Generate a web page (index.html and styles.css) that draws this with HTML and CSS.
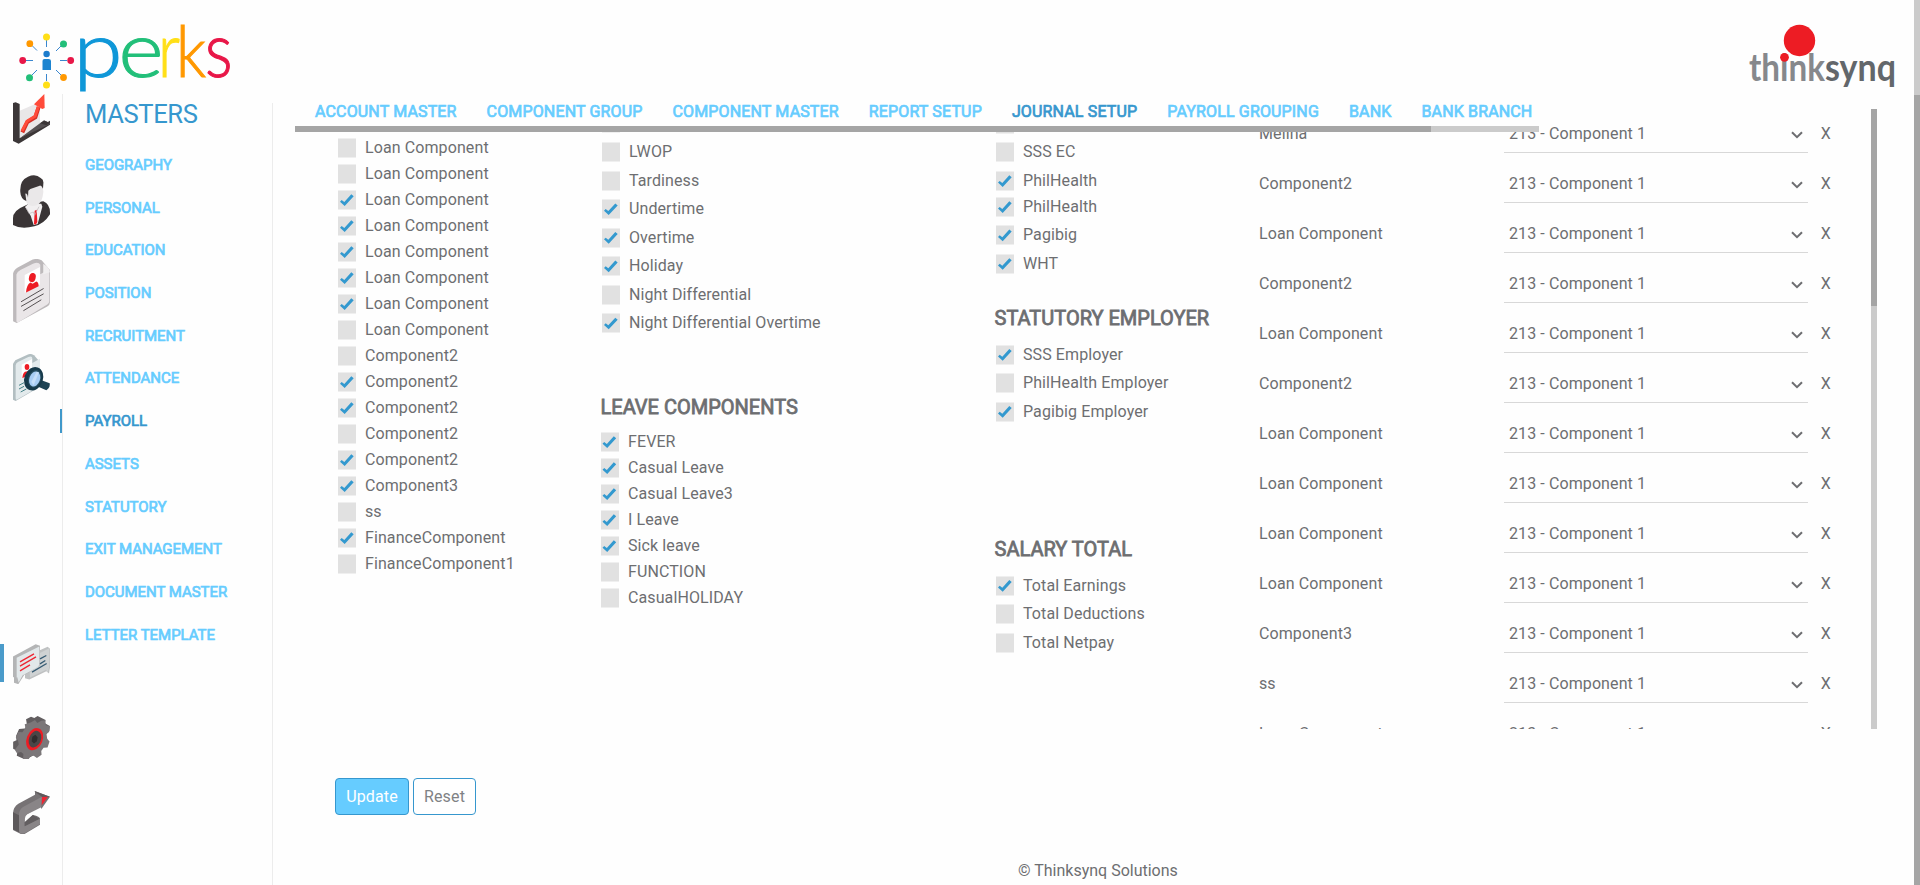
FILE: index.html
```html
<!DOCTYPE html>
<html lang="en">
<head>
<meta charset="utf-8">
<title>Perks - Journal Setup</title>
<link rel="stylesheet" href="styles.css">
</head>
<body>
<div class="page">
<header class="header">
  <svg class="logo" viewBox="0 0 240 94" width="240" height="94">
    <g stroke="#3a87cf" stroke-width="1">
      <path d="M46.500 40v7M46.500 74v7M26 60.500h7M60 60.500h7M32 45.500l5 5M61 46l-5 5M32 75l5-5M61 75l-5-5"/>
    </g>
    <g><circle cx="46.500" cy="37" r="3.500" fill="#ffdf17"/><circle cx="46.500" cy="85" r="3.500" fill="#ffdf17"/>
    <circle cx="29.800" cy="43.700" r="3.400" fill="#ff9800"/><circle cx="63.500" cy="77.500" r="3.400" fill="#ff9800"/>
    <circle cx="63.500" cy="44" r="3.500" fill="#22bf79"/><circle cx="29.500" cy="77.700" r="3.500" fill="#22bf79"/>
    <circle cx="22.700" cy="60.500" r="3.400" fill="#e81748"/><circle cx="70.700" cy="60.500" r="3.400" fill="#e81748"/>
    <circle cx="46.600" cy="54" r="3.200" fill="#1c7ccc"/><path d="M42.500 70V61q0-2 2-2h4q2.500 0 2.500 2v9z" fill="#1c84d0"/></g>
    <g class="perks">
      <text x="73.500" y="76.500" fill="#0f97d8" stroke="#0f97d8" textLength="49" lengthAdjust="spacingAndGlyphs">p</text>
      <text x="118.500" y="76.500" fill="#22bf79" stroke="#22bf79" textLength="45" lengthAdjust="spacingAndGlyphs">e</text>
      <text x="158" y="76.500" fill="#ffdf17" stroke="#ffdf17" textLength="22" lengthAdjust="spacingAndGlyphs">r</text>
      <text class="k" x="176" y="77" fill="#ff9800" stroke="#ff9800" textLength="30" lengthAdjust="spacingAndGlyphs">k</text>
      <text x="205" y="76.500" fill="#e81748" stroke="#e81748" textLength="27.500" lengthAdjust="spacingAndGlyphs">s</text>
    </g>
  </svg>
  <svg class="brand" viewBox="0 0 160 94" width="160" height="94">
    <text class="brand-text" x="8" y="81" textLength="76" lengthAdjust="spacingAndGlyphs" fill="#86888c">think</text>
    <text class="brand-text" x="84" y="81" textLength="71" lengthAdjust="spacingAndGlyphs" fill="#63676b">synq</text>
    <circle cx="58.500" cy="40.500" r="15.700" fill="#ed1c24"/><circle cx="43.500" cy="57.300" r="4.400" fill="#ed1c24"/>
  </svg>
</header>
<div class="body">
  <nav class="rail">
    <a class="ico chart"><svg viewBox="39 282 111 150" width="37" height="50">
      <path d="M59 332l61-26v66l-61 41z" fill="#e9e7e8"/><path d="M39 309l8-2 12 5v103l91-53v12L56 431l-17-8z" fill="#3b3637"/><path d="M59 415l61-45 12-9 18 8v3z" fill="#565153"/><path d="M120 370l13-8 17 7-11 7z" fill="#3b3637"/><path d="M67 397l15-31 24-14 10-31" fill="none" stroke="#d62f25" stroke-width="12" stroke-linejoin="round"/><path d="M66 393l15-29 24-15 10-29" fill="none" stroke="#ff4b3a" stroke-width="9" stroke-linejoin="round"/><path d="M102 313l31-31 1 42-7 3z" fill="#ff4b3a"/></svg></a>
    <a class="ico man"><svg viewBox="39 525 111 159" width="37" height="53">
      <path d="M39 655q0-24 34-37l17-8 40-6q20 8 20 34v5q-18 29-47 36-40 10-64-4z" fill="#393435"/><path d="M75 621l10-10h39l3 9-14 52-12 3-9-28z" fill="#f1eff0"/><path d="M74 590l7-30 45-15 4 30q-2 27-14 37-13 10-29 3-10-6-13-25z" fill="#eae8e9"/><path d="M61 577q-3-36 23-47 23-10 38 4 10 5 8 17l-1 15q-6-13-12-8l-26 9-6 5-1 21q-2-14-8-12l3 22q-17-6-18-26z" fill="#3b3637"/><path d="M104 632l6-3 2 37-5 8-5-2z" fill="#ed1c24"/><path d="M79 624l8 17 13-5 4 10 13-26" fill="none" stroke="#bbb7b9" stroke-width="2"/></svg></a>
    <a class="ico doc"><svg viewBox="39 56 111 193" width="37" height="64">
      <path d="M39 100q2-11 14-18l38-21q18-10 34-1l25 29v98q0 8-8 12l-92 50-11-5z" fill="#bdb9bb"/><path d="M49 103q1-8 12-14l38-19q17-6 22 3v29l27-15v97q0 5-6 9L56 246q-7 4-7-4z" fill="#eae6e8"/><path d="M130 70q20 12 20 26l-20 6z" fill="#f1eff0"/><path d="M74 104l46-24v53l-46 25z" fill="#fff"/><ellipse cx="97" cy="112" rx="10" ry="14" transform="rotate(15 97 112)" fill="#ed1c24"/><path d="M78 157q1-22 13-30l7 4 11-7q7 2 7 14z" fill="#ed1c24"/><path d="M63 185l68-40M63 199l68-38M70 212l54-33" stroke="#555052" stroke-width="3"/></svg></a>
    <a class="ico find"><svg viewBox="39 342 111 141" width="37" height="47">
      <path d="M39 371l7-10 36-17q12-5 20 2l18 20v74l-73 43-8-4z" fill="#b2bec1"/><path d="M47 376q0-6 7-10l31-15q12-5 12 5v13l23-13v83l-66 38q-7 5-7-2z" fill="#e3eaec"/><path d="M65 374l31-17v42l-31 18z" fill="#fff"/><ellipse cx="81" cy="381" rx="7" ry="9" fill="#ed1c24"/><path d="M67 415q1-16 8-20l11-2 3 10z" fill="#ed1c24"/><path d="M57 436l15-8M57 447l15-8M62 456l17-9" stroke="#458187" stroke-width="3"/><path d="M116 418l33 12q2 13-10 21l-31-14z" fill="#1d4354"/><ellipse cx="101" cy="416" rx="28" ry="36" transform="rotate(20 101 416)" fill="#173a4b"/><ellipse cx="104" cy="416" rx="19" ry="27" transform="rotate(20 104 416)" fill="#285063"/><ellipse cx="104" cy="417" rx="16" ry="23" transform="rotate(20 104 417)" fill="#a8cdf4"/><path d="M94 426l16-31 7 2-16 39z" fill="#c6dffa"/></svg></a>
    <a class="ico chat active"><svg viewBox="39 72 111 119" width="37" height="40">
      <path d="M75 110l68-30 7 6v55l-3 19-8-7-51 25-13-4z" fill="#bfc1c2"/><path d="M87 115l61-31v56l-5 16-5-7-48 23z" fill="#cfd2d3"/><path d="M39 109l68-37 13 5v58q-27 19-47 29l-18 28-13-4v-16l-3-2z" fill="#b4b5b6"/><path d="M50 113l68-34v54q-1 6-11 11l-39 21-12 22-4-16-2 1z" fill="#e2e8ea"/><path d="M60 125l42-24M60 138l48-28M60 152l30-18" stroke="#ee2633" stroke-width="4"/><path d="M120 116l19-10M120 131l16-10M96 156l44-26" stroke="#365b73" stroke-width="4"/></svg></a>
    <a class="ico gear"><svg viewBox="39 288 111 130" width="37" height="43">
      <path d="M78 298l15-8 10 4 10-6 24 12-2 10 15 8-3 18-8 5-26 59-27 15-14 3-22-10 2-14-13-7v-21l10-5-1-13 9-21 17-1 7-10z" fill="#625e60"/><path d="M92 308l13-8 7 9 12-7 12-1 2 15 12 3-1 14-9 10 2 14 7 8-6 18-12 1-7 10 1 11-14 10-10-7-10 2-7 12-15-4 1-15-7-6-13 3-6-10 12-16-2-11-7-10 8-17 12 1 9-13-2-11z" fill="#7b7779"/><ellipse cx="104" cy="358" rx="24" ry="35" transform="rotate(22 104 358)" fill="#ed1c24"/><ellipse cx="105" cy="358" rx="18" ry="26" transform="rotate(22 105 358)" fill="#4a4647"/><path d="M97 351l9-6 7 7-2 12-9 7-7-7z" fill="#302d2e"/></svg></a>
    <a class="ico exit"><svg viewBox="39 513 111 129" width="37" height="43">
      <path d="M39 579q1-18 16-28l50-27v-11l45 17-26 37-2-10-44 27q-4 3-4 9v14l25-22q21 5 21 11v18l-45 27q-7 3-14 0l-22-11z" fill="#767274"/><path d="M39 577l18 9v51l-18-9z" fill="#5d595b"/><path d="M57 586q0-18 12-25l57-31-2 32-42 21q-8 5-8 15v20l46-23v17l-45 27q-17 6-18-10z" fill="#898587"/><path d="M74 607l24-22 21 11-45 23z" fill="#625e60"/><path d="M102 513l48 17-20 3z" fill="#5d595b"/><path d="M126 531l18-1-19 26z" fill="#ee2633"/></svg></a>
  </nav>
  <aside class="menu">
    <h1 class="menu-title">MASTERS</h1>
    <a class="menu-item">GEOGRAPHY</a>
    <a class="menu-item">PERSONAL</a>
    <a class="menu-item">EDUCATION</a>
    <a class="menu-item">POSITION</a>
    <a class="menu-item">RECRUITMENT</a>
    <a class="menu-item">ATTENDANCE</a>
    <a class="menu-item current">PAYROLL</a>
    <a class="menu-item">ASSETS</a>
    <a class="menu-item">STATUTORY</a>
    <a class="menu-item">EXIT MANAGEMENT</a>
    <a class="menu-item">DOCUMENT MASTER</a>
    <a class="menu-item">LETTER TEMPLATE</a>
  </aside>
  <main class="main">
    <div class="tabs">
      <div class="tab-row"><a>ACCOUNT MASTER</a><a>COMPONENT GROUP</a><a>COMPONENT MASTER</a><a>REPORT SETUP</a><a class="current">JOURNAL SETUP</a><a>PAYROLL GROUPING</a><a>BANK</a><a>BANK BRANCH</a></div>
      <div class="hbar"><div class="hthumb"></div></div>
    </div>
    <div class="panel">
      <section class="col loans">
        <label class="row"><i class="box"></i>Loan Component</label>
        <label class="row"><i class="box"></i>Loan Component</label>
        <label class="row"><i class="box on"></i>Loan Component</label>
        <label class="row"><i class="box on"></i>Loan Component</label>
        <label class="row"><i class="box on"></i>Loan Component</label>
        <label class="row"><i class="box on"></i>Loan Component</label>
        <label class="row"><i class="box on"></i>Loan Component</label>
        <label class="row"><i class="box"></i>Loan Component</label>
        <label class="row"><i class="box"></i>Component2</label>
        <label class="row"><i class="box on"></i>Component2</label>
        <label class="row"><i class="box on"></i>Component2</label>
        <label class="row"><i class="box"></i>Component2</label>
        <label class="row"><i class="box on"></i>Component2</label>
        <label class="row"><i class="box on"></i>Component3</label>
        <label class="row"><i class="box"></i>ss</label>
        <label class="row"><i class="box on"></i>FinanceComponent</label>
        <label class="row"><i class="box"></i>FinanceComponent1</label>
      </section>
      <section class="col time">
        <label class="row tall"><i class="box"></i></label>
        <label class="row tall"><i class="box"></i>LWOP</label>
        <label class="row tall"><i class="box"></i>Tardiness</label>
        <label class="row tall"><i class="box on"></i>Undertime</label>
        <label class="row tall"><i class="box on"></i>Overtime</label>
        <label class="row tall"><i class="box on"></i>Holiday</label>
        <label class="row tall"><i class="box"></i>Night Differential</label>
        <label class="row tall"><i class="box on"></i>Night Differential Overtime</label>
        <h2 class="heading leave-heading">LEAVE COMPONENTS</h2>
        <div class="leave">
          <label class="row"><i class="box on"></i>FEVER</label>
          <label class="row"><i class="box on"></i>Casual Leave</label>
          <label class="row"><i class="box on"></i>Casual Leave3</label>
          <label class="row"><i class="box on"></i>I Leave</label>
          <label class="row"><i class="box on"></i>Sick leave</label>
          <label class="row"><i class="box"></i>FUNCTION</label>
          <label class="row"><i class="box"></i>CasualHOLIDAY</label>
        </div>
      </section>
      <section class="col statutory">
        <label class="row tall"><i class="box"></i></label>
        <label class="row tall"><i class="box"></i>SSS EC</label>
        <label class="row tall"><i class="box on"></i>PhilHealth</label>
        <label class="row tight"><i class="box on"></i>PhilHealth</label>
        <label class="row tall"><i class="box on"></i>Pagibig</label>
        <label class="row tall"><i class="box on"></i>WHT</label>
        <h2 class="heading employer-heading">STATUTORY EMPLOYER</h2>
        <label class="row tall"><i class="box on"></i>SSS Employer</label>
        <label class="row tall"><i class="box"></i>PhilHealth Employer</label>
        <label class="row tall"><i class="box on"></i>Pagibig Employer</label>
        <h2 class="heading salary-heading">SALARY TOTAL</h2>
        <label class="row tall"><i class="box on"></i>Total Earnings</label>
        <label class="row tall"><i class="box"></i>Total Deductions</label>
        <label class="row tall"><i class="box"></i>Total Netpay</label>
      </section>
      <section class="mapping">
        <div class="map"><span>Melina</span><div class="select">213 - Component 1<svg class="chev" viewBox="0 0 12 8"><path d="M1 1.200l5 5 5-5"/></svg></div><b>X</b></div>
        <div class="map"><span>Component2</span><div class="select">213 - Component 1<svg class="chev" viewBox="0 0 12 8"><path d="M1 1.200l5 5 5-5"/></svg></div><b>X</b></div>
        <div class="map"><span>Loan Component</span><div class="select">213 - Component 1<svg class="chev" viewBox="0 0 12 8"><path d="M1 1.200l5 5 5-5"/></svg></div><b>X</b></div>
        <div class="map"><span>Component2</span><div class="select">213 - Component 1<svg class="chev" viewBox="0 0 12 8"><path d="M1 1.200l5 5 5-5"/></svg></div><b>X</b></div>
        <div class="map"><span>Loan Component</span><div class="select">213 - Component 1<svg class="chev" viewBox="0 0 12 8"><path d="M1 1.200l5 5 5-5"/></svg></div><b>X</b></div>
        <div class="map"><span>Component2</span><div class="select">213 - Component 1<svg class="chev" viewBox="0 0 12 8"><path d="M1 1.200l5 5 5-5"/></svg></div><b>X</b></div>
        <div class="map"><span>Loan Component</span><div class="select">213 - Component 1<svg class="chev" viewBox="0 0 12 8"><path d="M1 1.200l5 5 5-5"/></svg></div><b>X</b></div>
        <div class="map"><span>Loan Component</span><div class="select">213 - Component 1<svg class="chev" viewBox="0 0 12 8"><path d="M1 1.200l5 5 5-5"/></svg></div><b>X</b></div>
        <div class="map"><span>Loan Component</span><div class="select">213 - Component 1<svg class="chev" viewBox="0 0 12 8"><path d="M1 1.200l5 5 5-5"/></svg></div><b>X</b></div>
        <div class="map"><span>Loan Component</span><div class="select">213 - Component 1<svg class="chev" viewBox="0 0 12 8"><path d="M1 1.200l5 5 5-5"/></svg></div><b>X</b></div>
        <div class="map"><span>Component3</span><div class="select">213 - Component 1<svg class="chev" viewBox="0 0 12 8"><path d="M1 1.200l5 5 5-5"/></svg></div><b>X</b></div>
        <div class="map"><span>ss</span><div class="select">213 - Component 1<svg class="chev" viewBox="0 0 12 8"><path d="M1 1.200l5 5 5-5"/></svg></div><b>X</b></div>
        <div class="map"><span>Loan Component</span><div class="select">213 - Component 1<svg class="chev" viewBox="0 0 12 8"><path d="M1 1.200l5 5 5-5"/></svg></div><b>X</b></div>
      </section>
      <div class="vbar"><div class="vthumb"></div></div>
    </div>
    <div class="actions"><button class="btn primary">Update</button><button class="btn">Reset</button></div>
    <footer class="footer">© Thinksynq Solutions</footer>
  </main>
</div>
</div>
<div class="page-bar"><div class="page-thumb"></div></div>
</body>
</html>
```
FILE: styles.css
```css
* { box-sizing: border-box; }
body {
  margin: 0;
  height: 885px;
  display: grid;
  grid-template-columns: 1fr 6px;
  overflow: hidden;
  background: #fefefe;
  color: #6d6e71;
  font: 16px/26px Roboto, "Liberation Sans", sans-serif;
}
.page { display: flex; flex-direction: column; height: 885px; min-width: 0; }
.page-bar { background: #cbcbcb; padding-top: 95px; }
.page-thumb { background: #a5a5a5; height: 790px; }

.header { height: 94px; display: flex; justify-content: space-between; padding-right: 13px; }
.perks { font-family: Lato, sans-serif; font-weight: 300; font-size: 76px; stroke-width: 1.100; }
.perks .k { font-size: 70px; }
.brand-text { font-family: Lato, sans-serif; font-weight: 700; font-size: 38px; }

.body { flex: 1; display: flex; min-height: 0; }

.rail { width: 63px; border-right: 1px solid #ececec; display: flex; flex-direction: column; }
.ico { position: relative; display: block; padding-left: 13px; }
.ico svg { display: block; }
.man { margin-top: 31px; }
.doc { margin-top: 31px; }
.find { margin-top: 31px; }
.chat { margin-top: 243px; }
.gear { margin-top: 32px; }
.exit { margin-top: 32px; }
.active::before { content: ""; position: absolute; left: 0; top: 0; width: 4px; height: 38px; background: #4a9bca; }

.menu { width: 210px; margin-top: 9px; border-right: 1px solid #ececec; padding-left: 22px; display: flex; flex-direction: column; }
.menu-title { margin: -1px 0 26.800px; font-size: 25.600px; line-height: 24px; font-weight: 400; letter-spacing: -.4px; color: #3697ce; }
.menu-item { position: relative; height: 24px; line-height: 24px; margin-bottom: 18.740px; font-size: 15px; font-weight: 400; letter-spacing: -.04px; color: #66ccff; -webkit-text-stroke: .7px #66ccff; }
.current.menu-item { color: #3697ce; -webkit-text-stroke-color: #3697ce; }
.menu-item.current::before { content: ""; position: absolute; left: -25px; top: 0; width: 2px; height: 24px; background: #3f98ca; }

.main { position: relative; flex: 1; padding-top: 15px; display: flex; flex-direction: column; min-width: 0; }
.tabs { position: absolute; z-index: 1; left: 22px; top: 4px; width: 1244px; background: #fefefe; }
.tab-row { display: flex; gap: 30px; padding-left: 20px; height: 28px; line-height: 28px; letter-spacing: .15px; white-space: nowrap; color: #66ccff; -webkit-text-stroke: .7px currentColor; }
.tab-row .current { color: #3697ce; }
.hbar { height: 6px; background: #cbcbcb; }
.hthumb { width: 1136px; height: 6px; background: #a5a5a5; }

.panel { display: grid; grid-template-columns: 264px 394px 263px 1fr 6px; height: 620px; margin-right: 37px; padding-left: 65px; overflow: hidden; letter-spacing: .1px; }
.row { display: flex; align-items: center; gap: 9px; height: 26px; white-space: nowrap; }
.row.tall { height: 28.570px; }
.row.tight { margin: -1.300px 0 1.100px; }
.statutory { padding-top: .5px; }
.time { padding-top: .15px; }
.leave .row { gap: 9.500px; }
.box { position: relative; flex: none; width: 18px; height: 20px; background: #e1e1e1; border: solid #efefef; border-width: 1px 0; }
.box.on::after { content: ""; position: absolute; left: 0; top: -1px; width: 18px; height: 20px; background: #3399cf; clip-path: polygon(2px 11.700px, 3.700px 10px, 6.300px 12px, 13.300px 4.300px, 15.700px 6.300px, 6.700px 16px); }
.loans { padding-top: 26px; }
.heading { margin: 0 0 0 -1.500px; font-size: 20px; line-height: 24px; font-weight: 400; letter-spacing: 0; -webkit-text-stroke: .8px currentColor; white-space: nowrap; }
.leave-heading { margin-top: 57.300px; }
.leave { margin: 10px 0 0 -1.500px; }
.employer-heading { margin-top: 27.800px; margin-bottom: 10.500px; }
.salary-heading { margin-top: 111.200px; margin-bottom: 10.200px; }

.mapping { margin-top: -6px; }
.map { display: grid; grid-template-columns: 245px 304px auto; height: 50px; line-height: 24px; padding-top: 19px; }
.select { display: flex; justify-content: space-between; align-items: flex-start; height: 31px; padding: 0 5px; border-bottom: 1px solid #d8d8d8; }
.chev { width: 12px; height: 8px; margin-top: 9px; fill: none; stroke: #6d6e71; stroke-width: 2; }
.map b { font-weight: 400; padding-left: 12.700px; }
.vbar { background: #cbcbcb; }
.vthumb { height: 197px; background: #a5a5a5; }

.actions { display: flex; gap: 4px; margin: 49px 0 0 62px; }
.btn { width: 63px; height: 37px; padding: 0; border: 1px solid #3697ce; border-radius: 4px; background: #fff; color: #808285; font: 16px/24px Roboto, sans-serif; letter-spacing: .15px; }
.btn.primary { width: 74px; background: #66ccff; color: #fff; }
.footer { margin-top: 43px; padding-left: 745px; }
```
